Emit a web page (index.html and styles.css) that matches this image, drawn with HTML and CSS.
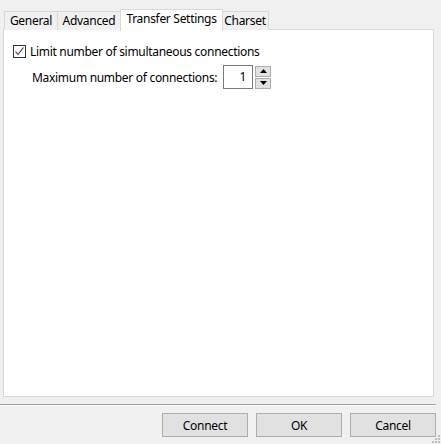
FILE: index.html
```html
<!DOCTYPE html>
<html>
<head>
<meta charset="utf-8">
<link rel="stylesheet" href="styles.css">
</head>
<body>
<div class="dialog">
  <div class="tabs">
    <div class="tab first w-general">General</div>
    <div class="tab w-advanced">Advanced</div>
    <div class="tab active w-transfer">Transfer Settings</div>
    <div class="tab w-charset">Charset</div>
  </div>
  <div class="panel">
    <label class="check-row">
      <span class="checkbox">
        <svg width="11" height="11" viewBox="0 0 11 11"><path d="M1.5 5.5 L4 8.5 L9.5 1.5" fill="none" stroke="#333" stroke-width="1.1"/></svg>
      </span>
      <span>Limit number of simultaneous connections</span>
    </label>
    <div class="field-row">
      <span class="field-label">Maximum number of connections:</span>
      <span class="spin-input">1</span>
      <span class="spin-buttons">
        <span class="spin-btn"><svg width="7" height="4" viewBox="0 0 7 4"><path d="M0 4 L3.5 0 L7 4 Z" fill="#000"/></svg></span>
        <span class="spin-btn"><svg width="7" height="4" viewBox="0 0 7 4"><path d="M0 0 L3.5 4 L7 0 Z" fill="#000"/></svg></span>
      </span>
    </div>
  </div>
  <div class="separator"></div>
  <div class="buttons">
    <button class="btn">Connect</button>
    <button class="btn">OK</button>
    <button class="btn">Cancel</button>
  </div>
  <div class="grip">
    <svg width="9" height="9" viewBox="0 0 9 9">
      <rect x="7" y="1" width="2" height="2" fill="#bfbfbf"/>
      <rect x="4" y="4" width="2" height="2" fill="#bfbfbf"/>
      <rect x="7" y="4" width="2" height="2" fill="#bfbfbf"/>
      <rect x="1" y="7" width="2" height="2" fill="#bfbfbf"/>
      <rect x="4" y="7" width="2" height="2" fill="#bfbfbf"/>
      <rect x="7" y="7" width="2" height="2" fill="#bfbfbf"/>
    </svg>
  </div>
</div>
</body>
</html>
```

FILE: styles.css
```css
html, body {
  margin: 0;
  padding: 0;
  background: #f0f0f0;
}
body {
  width: 441px;
  height: 444px;
  overflow: hidden;
  font-family: "Noto Sans", "Open Sans", sans-serif;
  font-size: 12px;
  letter-spacing: -0.3px;
  color: #000;
}
.dialog {
  position: relative;
  width: 441px;
  height: 444px;
  display: flex;
  flex-direction: column;
}
.tabs {
  display: flex;
  align-items: flex-end;
  margin: 8px 0 0 4px;
  height: 22px;
  position: relative;
  z-index: 1;
}
.tab {
  height: 19px;
  box-sizing: border-box;
  border: 1px solid #d9d9d9;
  border-bottom: none;
  border-left: none;
  background: #f0f0f0;
  line-height: 18px;
  text-align: center;
  white-space: nowrap;
}
.tab.first {
  border-left: 1px solid #d9d9d9;
}
.w-general { width: 54px; }
.w-advanced { width: 63px; }
.w-transfer { width: 103px; }
.w-charset { width: 47px; }
.tab.active {
  height: 22px;
  background: #fff;
  border-left: 1px solid #d9d9d9;
  margin-left: -1px;
  margin-right: -1px;
  line-height: 17px;
  position: relative;
  top: 1px;
}
.tab.active + .tab {
  border-left: none;
}
.panel {
  margin: -1px 0 0 3px;
  width: 431px;
  height: 368px;
  box-sizing: border-box;
  background: #fff;
  border: 1px solid #d9d9d9;
  padding: 13px 0 0 9px;
}
.check-row {
  display: flex;
  align-items: center;
  gap: 4px;
  height: 16px;
}
.checkbox {
  width: 13px;
  height: 13px;
  box-sizing: border-box;
  border: 1px solid #333;
  display: flex;
  align-items: center;
  justify-content: center;
}
.field-row {
  display: flex;
  align-items: center;
  margin: 6px 0 0 19px;
  height: 24px;
}
.field-label {
  width: 191px;
  flex-shrink: 0;
  white-space: nowrap;
}
.spin-input {
  width: 30px;
  height: 24px;
  flex-shrink: 0;
  box-sizing: border-box;
  border: 1px solid #7a7a7a;
  text-align: right;
  padding-right: 6px;
  line-height: 22px;
}
.spin-buttons {
  display: flex;
  flex-direction: column;
  gap: 1px;
  margin-left: 2px;
}
.spin-btn {
  width: 16px;
  height: 11px;
  box-sizing: border-box;
  background: #e1e1e1;
  border: 1px solid #adadad;
  display: flex;
  align-items: center;
  justify-content: center;
}
.separator {
  margin-top: 7px;
  width: 436px;
  height: 1px;
  background: #a0a0a0;
  border-bottom: 1px solid #fff;
}
.buttons {
  display: flex;
  gap: 8px;
  margin: 7px 0 0 162px;
}
.btn {
  width: 86px;
  height: 24px;
  box-sizing: border-box;
  background: #e1e1e1;
  border: 1px solid #adadad;
  font-family: inherit;
  font-size: 12px;
  letter-spacing: -0.3px;
  color: #000;
  padding: 0;
}
.grip {
  position: absolute;
  right: 1px;
  bottom: 1px;
  width: 9px;
  height: 9px;
  line-height: 0;
}
```
